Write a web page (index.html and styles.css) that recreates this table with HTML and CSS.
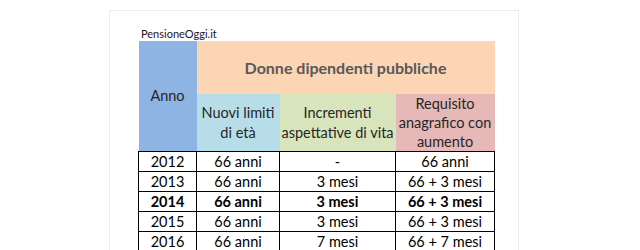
FILE: index.html
```html
<!DOCTYPE html>
<html lang="it">
<head>
<meta charset="utf-8">
<title>Donne dipendenti pubbliche</title>
<link rel="stylesheet" href="styles.css">
</head>
<body>
<div class="frame">
  <div class="source">PensioneOggi.it</div>
  <table class="req">
    <colgroup>
      <col class="c-anno">
      <col class="c-limiti">
      <col class="c-incr">
      <col class="c-req">
    </colgroup>
    <thead>
      <tr class="h1">
        <th rowspan="2" class="anno">Anno</th>
        <th colspan="3" class="title">Donne dipendenti pubbliche</th>
      </tr>
      <tr class="h2">
        <th class="limiti">Nuovi limiti<br>di età</th>
        <th class="incr">Incrementi<br>aspettative di vita</th>
        <th class="reqh">Requisito<br>anagrafico con<br>aumento</th>
      </tr>
    </thead>
    <tbody>
      <tr><td>2012</td><td>66 anni</td><td>-</td><td>66 anni</td></tr>
      <tr><td>2013</td><td>66 anni</td><td>3 mesi</td><td>66 + 3 mesi</td></tr>
      <tr class="bold"><td>2014</td><td>66 anni</td><td>3 mesi</td><td>66 + 3 mesi</td></tr>
      <tr><td>2015</td><td>66 anni</td><td>3 mesi</td><td>66 + 3 mesi</td></tr>
      <tr><td>2016</td><td>66 anni</td><td>7 mesi</td><td>66 + 7 mesi</td></tr>
    </tbody>
  </table>
</div>
</body>
</html>
```
FILE: styles.css
```css
html, body {
  margin: 0;
  padding: 0;
  background: #ffffff;
}

body {
  font-family: Lato, "Open Sans", sans-serif;
  color: #000;
}

.frame {
  margin: 10px 0 0 109px;
  width: 410px;
  height: 300px;
  border: 1px solid #ececec;
  padding: 16px 0 0 28px;
  box-sizing: border-box;
}

.source {
  font-size: 11px;
  line-height: 14px;
  color: #1c1424;
  padding-left: 3px;
}

.req {
  border-collapse: collapse;
  table-layout: fixed;
  width: 356px;
  font-size: 14.5px;
}

.c-anno { width: 58px; }
.c-limiti { width: 83px; }
.c-incr { width: 116px; }
.c-req { width: 99px; }

.req th {
  font-weight: normal;
  padding: 0;
  border: none;
  text-align: center;
  vertical-align: middle;
  line-height: 20px;
  color: #262626;
  overflow: hidden;
}

.h1 { height: 53px; }
.h2 { height: 57px; }

.anno {
  background: #8db4e2;
  padding-bottom: 2px;
}

.req th.title {
  background: #fcd5b4;
  color: #595959;
  font-weight: bold;
  font-size: 16px;
}

.limiti { background: #b7dee8; }
.incr { background: #d8e4bc; }

.req th.reqh {
  background: #e6b8b7;
  line-height: 19px;
}

.req td {
  border: 1px solid #000;
  height: 19px;
  padding: 0;
  line-height: 19px;
  text-align: center;
}

.bold td { font-weight: bold; }
```
